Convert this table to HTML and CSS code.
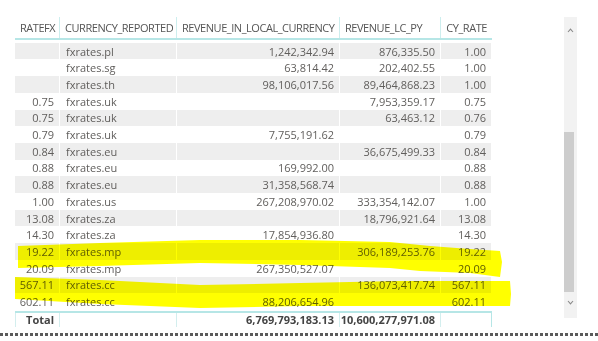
FILE: index.html
```html
<!DOCTYPE html>
<html lang="en">
<head>
    <meta charset="UTF-8">
    <meta name="viewport" content="width=device-width, initial-scale=1.0">
    <title>FX Rates</title>
    <link rel="stylesheet" href="styles.css">
</head>
<body>

    <div class="visual">
        <div class="grid">
            <!-- Column headers -->
            <div class="row header-row">
                <div class="cell">RATEFX</div>
                <div class="cell">CURRENCY_REPORTED</div>
                <div class="cell">REVENUE_IN_LOCAL_CURRENCY</div>
                <div class="cell">REVENUE_LC_PY</div>
                <div class="cell">CY_RATE</div>
            </div>

            <div class="rows">
                <div class="row"><div class="cell num"></div><div class="cell">fxrates.pl</div><div class="cell num">1,242,342.94</div><div class="cell num">876,335.50</div><div class="cell num">1.00</div></div>
                <div class="row"><div class="cell num"></div><div class="cell">fxrates.sg</div><div class="cell num">63,814.42</div><div class="cell num">202,402.55</div><div class="cell num">1.00</div></div>
                <div class="row"><div class="cell num"></div><div class="cell">fxrates.th</div><div class="cell num">98,106,017.56</div><div class="cell num">89,464,868.23</div><div class="cell num">1.00</div></div>
                <div class="row"><div class="cell num">0.75</div><div class="cell">fxrates.uk</div><div class="cell num"></div><div class="cell num">7,953,359.17</div><div class="cell num">0.75</div></div>
                <div class="row"><div class="cell num">0.75</div><div class="cell">fxrates.uk</div><div class="cell num"></div><div class="cell num">63,463.12</div><div class="cell num">0.76</div></div>
                <div class="row"><div class="cell num">0.79</div><div class="cell">fxrates.uk</div><div class="cell num">7,755,191.62</div><div class="cell num"></div><div class="cell num">0.79</div></div>
                <div class="row"><div class="cell num">0.84</div><div class="cell">fxrates.eu</div><div class="cell num"></div><div class="cell num">36,675,499.33</div><div class="cell num">0.84</div></div>
                <div class="row"><div class="cell num">0.88</div><div class="cell">fxrates.eu</div><div class="cell num">169,992.00</div><div class="cell num"></div><div class="cell num">0.88</div></div>
                <div class="row"><div class="cell num">0.88</div><div class="cell">fxrates.eu</div><div class="cell num">31,358,568.74</div><div class="cell num"></div><div class="cell num">0.88</div></div>
                <div class="row"><div class="cell num">1.00</div><div class="cell">fxrates.us</div><div class="cell num">267,208,970.02</div><div class="cell num">333,354,142.07</div><div class="cell num">1.00</div></div>
                <div class="row"><div class="cell num">13.08</div><div class="cell">fxrates.za</div><div class="cell num"></div><div class="cell num">18,796,921.64</div><div class="cell num">13.08</div></div>
                <div class="row"><div class="cell num">14.30</div><div class="cell">fxrates.za</div><div class="cell num">17,854,936.80</div><div class="cell num"></div><div class="cell num">14.30</div></div>
                <div class="row"><div class="cell num">19.22</div><div class="cell">fxrates.mp</div><div class="cell num"></div><div class="cell num">306,189,253.76</div><div class="cell num">19.22</div></div>
                <div class="row"><div class="cell num">20.09</div><div class="cell">fxrates.mp</div><div class="cell num">267,350,527.07</div><div class="cell num"></div><div class="cell num">20.09</div></div>
                <div class="row"><div class="cell num">567.11</div><div class="cell">fxrates.cc</div><div class="cell num"></div><div class="cell num">136,073,417.74</div><div class="cell num">567.11</div></div>
                <div class="row"><div class="cell num">602.11</div><div class="cell">fxrates.cc</div><div class="cell num">88,206,654.96</div><div class="cell num"></div><div class="cell num">602.11</div></div>
            </div>

            <!-- Totals -->
            <div class="row total-row">
                <div class="cell">Total</div>
                <div class="cell"></div>
                <div class="cell num">6,769,793,183.13</div>
                <div class="cell num">10,600,277,971.08</div>
                <div class="cell num"></div>
            </div>
        </div>

        <!-- Vertical scrollbar -->
        <div class="scrollbar">
            <svg class="arrow" width="7" height="5" viewBox="0 0 7 5"><path d="M1 4 L3.5 1.2 L6 4" fill="none" stroke="#8a8a8a" stroke-width="1.1"/></svg>
            <div class="thumb"></div>
            <svg class="arrow" width="7" height="5" viewBox="0 0 7 5"><path d="M1 1 L3.5 3.8 L6 1" fill="none" stroke="#8a8a8a" stroke-width="1.1"/></svg>
        </div>
    </div>

    <div class="dotted"></div>

    <!-- Highlighter marks drawn over the table -->
    <svg class="marker" width="598" height="341" viewBox="0 0 598 341">
        <polygon points="18,246 100,243 200,240 300,240 390,242 430,246 470,249 500,251 502,262 500,277 470,273 420,271 390,268 300,265 200,263 100,266 18,268"/>
        <polygon points="15,277 100,280 200,285 300,283 400,281 500,281 510,281 511,294 510,306 400,306 300,306 200,308 100,304 15,299"/>
    </svg>

</body>
</html>
```

FILE: styles.css
```css
body {
    font-family: 'Segoe UI', 'Open Sans', sans-serif;
    font-size: 11px;
    color: #605e5c;
    background-color: #fff;
    margin: 0;
    padding: 0;
}

.visual {
    display: flex;
    padding: 17px 0 0 15px;
    height: 312px;
}

.grid {
    width: 477px;
}

.row {
    display: grid;
    grid-template-columns: 45px 117px 163px 101px 51px;
    height: 16.71px;
    align-items: center;
}

.rows {
    padding-top: 2.7px;
}

.rows .row:nth-child(odd) {
    background-color: #eeeeee;
}

.cell {
    height: 100%;
    display: flex;
    align-items: center;
    padding: 0 5px 0 6px;
    border-right: 1px solid #fff;
    white-space: nowrap;
    overflow: hidden;
    box-sizing: border-box;
}

.cell.num {
    justify-content: flex-end;
}

.header-row {
    height: 21px;
    border-bottom: 2px solid #b6e6e6;
    color: #555;
    letter-spacing: -0.45px;
    box-sizing: content-box;
}

.header-row .cell {
    padding-left: 5px;
    border-right: 1px solid #cdeeee;
}

.header-row .cell:last-child {
    border-right: none;
    justify-content: flex-end;
}

.total-row {
    height: 14px;
    border-top: 2px solid #b6e6e6;
    margin-top: 1px;
    font-weight: bold;
    color: #444;
    box-sizing: content-box;
}

.total-row .cell {
    border-right: 1px solid #d3eeee;
}

.total-row .cell:first-child {
    border-left: 1px solid #d3eeee;
    justify-content: flex-end;
}

.total-row .cell:last-child {
    border-right: 1px solid #b6e6e6;
}

.scrollbar {
    margin-left: 72px;
    width: 13px;
    height: 301px;
    background-color: #f2f2f2;
    display: flex;
    flex-direction: column;
    align-items: center;
}

.scrollbar .arrow {
    margin: 11px 0 0 0;
}

.scrollbar .arrow:last-child {
    margin: 8px 0 0 0;
}

.scrollbar .thumb {
    width: 10px;
    height: 160px;
    margin-top: 99px;
    background-color: #cdcdcd;
    align-self: flex-start;
}

.dotted {
    height: 3px;
    margin-top: 4px;
    background: repeating-linear-gradient(to right, #5a5a5a 0, #5a5a5a 3px, transparent 3px, transparent 5px);
}

.marker {
    position: absolute;
    left: 0;
    top: 0;
    mix-blend-mode: multiply;
    pointer-events: none;
}

.marker polygon {
    fill: #ffff00;
}
```
